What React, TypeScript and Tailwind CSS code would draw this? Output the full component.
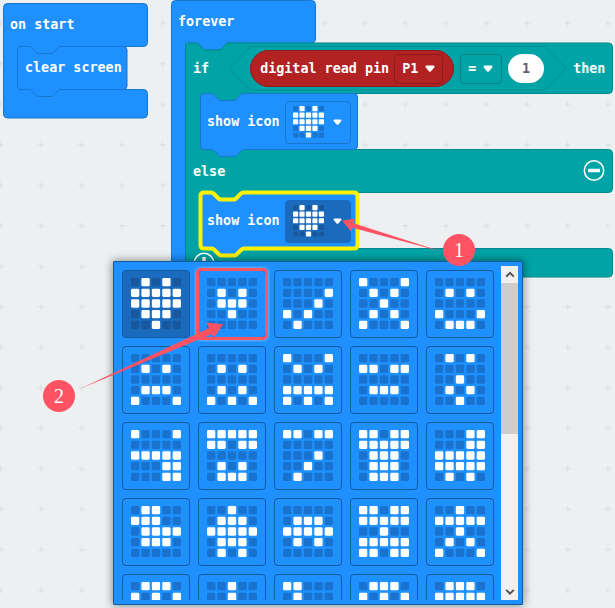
import React from "react";

const ICONS: string[] = [
  "01010 11111 11111 01110 00100",
  "00000 01010 01110 00100 00000",
  "00000 00001 00010 10100 01000",
  "10001 01010 00100 01010 10001",
  "00000 01010 00000 10001 01110",
  "00000 01010 00000 01110 10001",
  "00000 01010 00000 01010 10101",
  "10001 01010 00000 11111 10101",
  "00000 11011 00000 01110 00000",
  "01010 00000 00100 01010 00100",
  "10001 00000 11111 00011 00011",
  "11111 11011 00000 01010 01110",
  "11011 00000 00010 00100 01000",
  "11011 11111 01110 01110 01110",
  "00011 00011 11111 11111 01010",
  "01100 11100 01111 01110 00000",
  "00100 01110 11111 01110 01010",
  "00000 01110 11111 01010 00000",
  "11011 11111 00100 11111 11011",
  "00100 11111 00100 01010 10001",
  "01110 10101 11111 11111 10101",
  "00100 00100 00100 01110 00100",
  "11000 01000 01000 01110 01010",
  "01110 10101 11111 01110 01110",
  "01110 11111 00100 10100 01100",
];

/* 5x5 LED matrix */
function Leds({ rows, className }: { rows: string; className: string }) {
  return (
    <svg viewBox="0 0 50 51" preserveAspectRatio="none" className={className}>
      {rows.split(" ").flatMap((row, y) =>
        row.split("").map((led, x) => (
          <rect
            key={`${x}-${y}`}
            x={x * 10.42}
            y={y * 10.68}
            width={8.3}
            height={8.3}
            rx={1.4}
            fill={led === "1" ? "#ffffff" : "#0f2f5a"}
            fillOpacity={led === "1" ? 1 : 0.3}
          />
        )),
      )}
    </svg>
  );
}

function Caret({ className = "h-2 w-2.5" }: { className?: string }) {
  return (
    <svg viewBox="0 0 10 8" className={`shrink-0 ${className}`}>
      <path d="M1.8 .5h6.4q1.3 0 1.3 1.1 0 .7-.6 1.3L6 6.2q-1 1-2 0L1.1 2.9Q.5 2.3.5 1.6.5.5 1.8.5z" fill="#fff" />
    </svg>
  );
}

/* Silhouette of a block, drawn in workspace units behind its labels */
function Shape({ d, fill, stroke, width = 1 }: { d: string; fill: string; stroke: string; width?: number }) {
  return (
    <svg className="pointer-events-none absolute inset-0 h-[608px] w-[615px]" viewBox="0 0 615 608">
      <path d={d} fill={fill} stroke={stroke} strokeWidth={width} strokeLinejoin="round" />
    </svg>
  );
}

function ShowIcon({ className, open = false }: { className: string; open?: boolean }) {
  return (
    <div className={`absolute left-[200px] flex h-[56px] w-[158px] items-center pl-[7px] ${className}`}>
      <span>show icon</span>
      <div
        className={`ml-[5px] flex h-[43px] w-[66px] items-center rounded-[4px] border pl-[7.500px] ${
          open ? "border-[#1a6bbd] bg-[#1a6bbd]" : "border-[#1976cc]"
        }`}
      >
        <Leds rows={ICONS[0]} className="h-[31.500px] w-[31px]" />
        <Caret className="ml-[9px] h-[7px] w-[9px]" />
      </div>
    </div>
  );
}

function Workspace() {
  return (
    <div className="absolute inset-0 overflow-hidden whitespace-pre text-[13.4px] leading-5 text-white">
      <svg className="absolute inset-0 h-full w-full">
        <defs>
          <pattern id="grid" x="-19.9" y="2.8" width="40.5" height="40.5" patternUnits="userSpaceOnUse">
            <path d="M17.3 20.5h6.4M20.5 17.3v6.4" stroke="#dadedf" strokeWidth="1" />
          </pattern>
        </defs>
        <rect width="100%" height="100%" fill="url(#grid)" />
      </svg>

      <Shape
        fill="#1e90ff"
        stroke="#1976cc"
        d="M7.5 3.5H143.5q4 0 4 4V42.500q0 4-4 4H59.500l-6 6.500q-.8.500-2 .500H38q-1.200 0-2-.500l-5.500-5.500q-1-1-2.500-1h-7q-3.500 0-3.500 3.500V86q0 3.500 3.500 3.500H143.500q4 0 4 4V114q0 4-4 4H7.500q-4 0-4-4V7.500q0-4 4-4z"
      />
      <Shape
        fill="#1e90ff"
        stroke="#1976cc"
        d="M21 46.500h7.500q1.500 0 2.500 1l5 5q1 1 2.500 1H51q1.500 0 2.500-1l5-5q1-1 2.500-1H123.500q3.500 0 3.500 3.500V86q0 3.500-3.500 3.500H61q-1.500 0-2.500 1l-5 5q-1 1-2.500 1H38.500q-1.500 0-2.500-1l-5-5q-1-1-2.500-1H21q-3.500 0-3.500-3.500V50q0-3.500 3.500-3.500z"
      />
      <span className="absolute left-[10px] top-[15px]">on start</span>
      <span className="absolute left-[25px] top-[58px]">clear screen</span>

      <Shape
        fill="#1e90ff"
        stroke="#1976cc"
        d="M175.500 .5H311.500q4 0 4 4V39q0 4-4 4H228.500q-1.500 0-2.500 1l-5 5q-1 1-2.500 1H206q-1.500 0-2.500-1l-5-5q-1-1-2.500-1H185.500V300H171.500V4.500q0-4 4-4z"
      />
      <Shape
        fill="#00a4a6"
        stroke="#00888a"
        d="M189.500 43H196q1.500 0 2.500 1l5 5q1 1 2.500 1h12.500q1.500 0 2.500-1l5-5q1-1 2.500-1H608.500q4 0 4 4V89.500q0 4-4 4H243.500q-1.500 0-2.500 1l-5 5q-1 1-2.500 1H221q-1.500 0-2.500-1l-5-5q-1-1-2.500-1H204q-3.500 0-3.500 3.500V146q0 3.500 3.500 3.500H608.500q4 0 4 4V188.500q0 4-4 4H243.500q-1.500 0-2.500 1l-5 5q-1 1-2.500 1H221q-1.500 0-2.500-1l-5-5q-1-1-2.500-1H204q-3.500 0-3.500 3.500V245q0 3.500 3.500 3.500H608.500q4 0 4 4V273q0 4-4 4H189.500q-4 0-4-4V47q0-4 4-4z"
      />
      <Shape fill="#00a4a6" stroke="#008e90" d="M250.500 46.500H544.500L566 68.500 544.500 90H250.500L229 68.500z" />
      <span className="absolute left-[178px] top-[12px]">forever</span>

      <div className="absolute left-[193px] top-[46px] flex h-[45px] w-[420px] items-center">
        <span className="mt-px">if</span>
        <div className="ml-[41px] flex h-[37px] w-[204px] items-center rounded-full border border-[#8e1b1b] bg-[#b22222] pl-[9px]">
          <span className="mt-px">digital read pin</span>
          <div className="ml-[5px] flex h-[30px] w-[49px] items-center rounded-[4px] border border-[#8e1b1b] pl-[7px]">
            <span className="mt-px">P1</span>
            <Caret className="ml-[7px] h-2 w-2.5" />
          </div>
        </div>
        <div className="ml-[6px] flex h-[30px] w-[42px] items-center rounded-[4px] border border-[#008385] pl-[7px]">
          <span className="mt-px">=</span>
          <Caret className="ml-[7px] h-2 w-2.5" />
        </div>
        <div className="ml-[6px] flex h-[29px] w-[36px] items-center justify-center rounded-full bg-white pt-px text-[#575e75]">
          1
        </div>
        <span className="ml-[29px] mt-px">then</span>
      </div>

      <Shape
        fill="#1e90ff"
        stroke="#1976cc"
        d="M204 93.500h7q1.500 0 2.500 1l5 5q1 1 2.500 1h12.500q1.500 0 2.500-1l5-5q1-1 2.500-1H354q3.500 0 3.500 3.500V146q0 3.500-3.500 3.500H244q-1.500 0-2.500 1l-5 5q-1 1-2.500 1H221.500q-1.500 0-2.500-1l-5-5q-1-1-2.500-1H204q-3.500 0-3.500-3.500V97q0-3.500 3.500-3.500z"
      />
      <ShowIcon className="top-[94px]" />
      <span className="absolute left-[193px] top-[162px]">else</span>
      <svg className="absolute left-[583px] top-[160px] h-[22px] w-[22px]" viewBox="0 0 22 22">
        <circle cx="11" cy="10.500" r="9.700" fill="none" stroke="#fff" strokeWidth="1.500" />
        <rect x="5" y="8.700" width="12" height="3.600" rx=".6" fill="#fff" />
      </svg>
      <svg className="absolute left-[193px] top-[252px] h-[22px] w-[22px]" viewBox="0 0 22 22">
        <circle cx="11" cy="11" r="9.700" fill="none" stroke="#fff" strokeWidth="1.500" />
        <path d="M11 5v12M5 11h12" stroke="#fff" strokeWidth="3.400" />
      </svg>
      <Shape
        fill="#1e90ff"
        stroke="#fff200"
        width={4}
        d="M204 192.500h7q1.500 0 2.500 1l5 5q1 1 2.500 1h12.500q1.500 0 2.500-1l5-5q1-1 2.500-1H354q3.500 0 3.500 3.500V245q0 3.500-3.500 3.500H244q-1.500 0-2.500 1l-5 5q-1 1-2.500 1H221.500q-1.500 0-2.500-1l-5-5q-1-1-2.500-1H204q-3.500 0-3.500-3.500V196q0-3.500 3.500-3.500z"
      />
      <ShowIcon className="top-[193px]" open />
    </div>
  );
}

function Chevron({ down = false }: { down?: boolean }) {
  return (
    <div className="flex h-[17px] w-[17px] shrink-0 items-center justify-center bg-[#f0f0f0]">
      <svg viewBox="0 0 10 8" className="h-2 w-2.5">
        <path d={down ? "M1.200 1.800 5 5.600 8.800 1.800" : "M1.200 5.700 5 1.900 8.800 5.700"} fill="none" stroke="#505050" strokeWidth="1.900" />
      </svg>
    </div>
  );
}

function IconPicker() {
  return (
    <div className="absolute left-[113px] top-[261px] flex h-[344px] w-[410px] rounded-[1px] border border-[#165a9c] bg-[#1e90ff] p-1 shadow-[0_0_8px_1px_rgba(0,0,0,0.4)]">
      <div className="grid h-[334px] w-[383px] shrink-0 auto-rows-[68px] grid-cols-[repeat(5,68px)] gap-2 overflow-hidden p-1">
        {ICONS.map((rows, i) => (
          <div
            key={i}
            className={`flex rounded-[4px] border border-[#165a9c] pl-2 pt-[7px] ${i === 0 ? "bg-[#1a6bbd]" : ""}`}
          >
            <Leds rows={rows} className="h-[51px] w-[50px]" />
          </div>
        ))}
      </div>
      <div className="flex h-[334px] w-[17px] flex-col bg-[#f0f0f0]">
        <Chevron />
        <div className="h-[151px] bg-[#cdcdcd]" />
        <div className="flex-1" />
        <Chevron down />
      </div>
    </div>
  );
}

function Marker({ className, children }: { className: string; children: React.ReactNode }) {
  return (
    <div
      className={`absolute flex h-8 w-8 items-center justify-center rounded-full bg-[#ff5364] font-['Liberation_Serif',serif] text-[20px] font-normal leading-none text-white ${className}`}
    >
      {children}
    </div>
  );
}

export default function App() {
  return (
    <main className="relative h-[608px] w-[615px] overflow-hidden bg-[#ecf0f1] font-['DejaVu_Sans_Mono',monospace] font-semibold">
      <Workspace />
      <IconPicker />
      <div className="absolute left-[196px] top-[268px] h-[72px] w-[72px] rounded-[5px] border-3 border-[#ff5364] shadow-[0_0_2px_1px_rgba(255,255,255,0.35)]" />
      <svg className="pointer-events-none absolute inset-0 h-full w-full" viewBox="0 0 615 608">
        <path
          d="M342.300 220.500 355 218.800 353.600 223.200 443 251.900 352.300 227.800 350.800 231.500zM223 324.300 206.500 322.600 209.200 328 79.500 389 211.500 334.200 214.200 337.500z"
          fill="#ff5364"
        />
      </svg>
      <Marker className="left-[443px] top-[234px]">1</Marker>
      <Marker className="left-[43px] top-[380px]">2</Marker>
    </main>
  );
}
